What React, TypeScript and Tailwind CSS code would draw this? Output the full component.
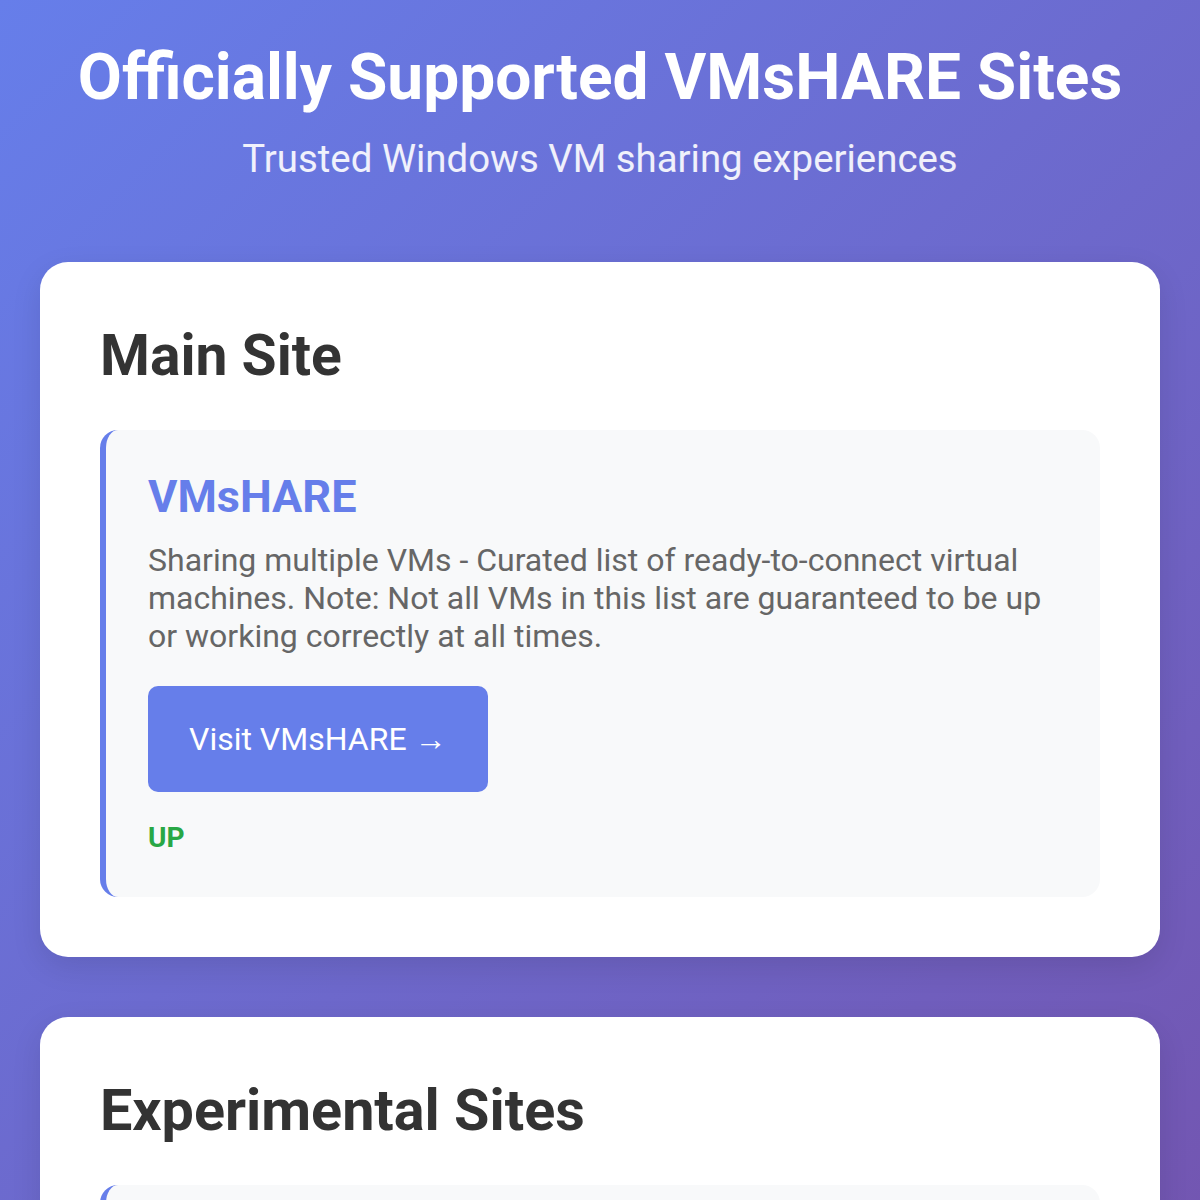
import React from "react";

function SiteCard({
  name,
  desc,
  button,
  status,
}: {
  name: string;
  desc: string;
  button: string;
  status: string;
}) {
  return (
    <div className="rounded-[18px] border-l-[6px] border-[#667eea] bg-[#f8f9fa] p-[42px]">
      <h3 className="text-[45px] font-bold leading-[50px] text-[#667eea]">{name}</h3>
      <p className="mt-[19px] text-[32px] leading-[38px] text-[#666666]">{desc}</p>
      <a className="mt-[31px] inline-flex h-[106px] items-center rounded-[10px] bg-[#667eea] px-[41px] text-[32px] text-white">
        {button}
      </a>
      <div className="mt-[29px] text-[28px] font-bold leading-[34px] text-[#28a745]">{status}</div>
    </div>
  );
}

export default function App() {
  return (
    <div
      className="min-h-screen bg-[linear-gradient(135deg,#667eea_0%,#764ba2_100%)] px-[40px] pb-[200px] pt-[41px]"
      style={{ fontFamily: "Roboto, 'Noto Sans', sans-serif" }}
    >
      <header className="text-center">
        <h1 className="text-[64px] font-bold leading-[74px] text-white">Officially Supported VMsHARE Sites</h1>
        <p className="mt-[22px] text-[38.4px] leading-[44px] text-white/90">Trusted Windows VM sharing experiences</p>
      </header>

      <section className="mt-[81px] rounded-[28px] bg-white p-[60px] shadow-[0_10px_30px_rgba(0,0,0,0.1)]">
        <h2 className="text-[57px] font-bold leading-[68px] text-[#333333]">Main Site</h2>
        <div className="mt-[40px]">
          <SiteCard
            name="VMsHARE"
            desc="Sharing multiple VMs - Curated list of ready-to-connect virtual machines. Note: Not all VMs in this list are guaranteed to be up or working correctly at all times."
            button="Visit VMsHARE →"
            status="UP"
          />
        </div>
      </section>

      <section className="mt-[60px] rounded-[28px] bg-white p-[60px] shadow-[0_10px_30px_rgba(0,0,0,0.1)]">
        <h2 className="text-[57.5px] font-bold leading-[68px] text-[#333333]">Experimental Sites</h2>
        <div className="mt-[40px]">
          <SiteCard
            name="VMsHARE Beta"
            desc="Experimental features and new VM sharing options. These sites may be unstable or change without notice."
            button="Visit Beta →"
            status="UP"
          />
        </div>
      </section>
    </div>
  );
}
